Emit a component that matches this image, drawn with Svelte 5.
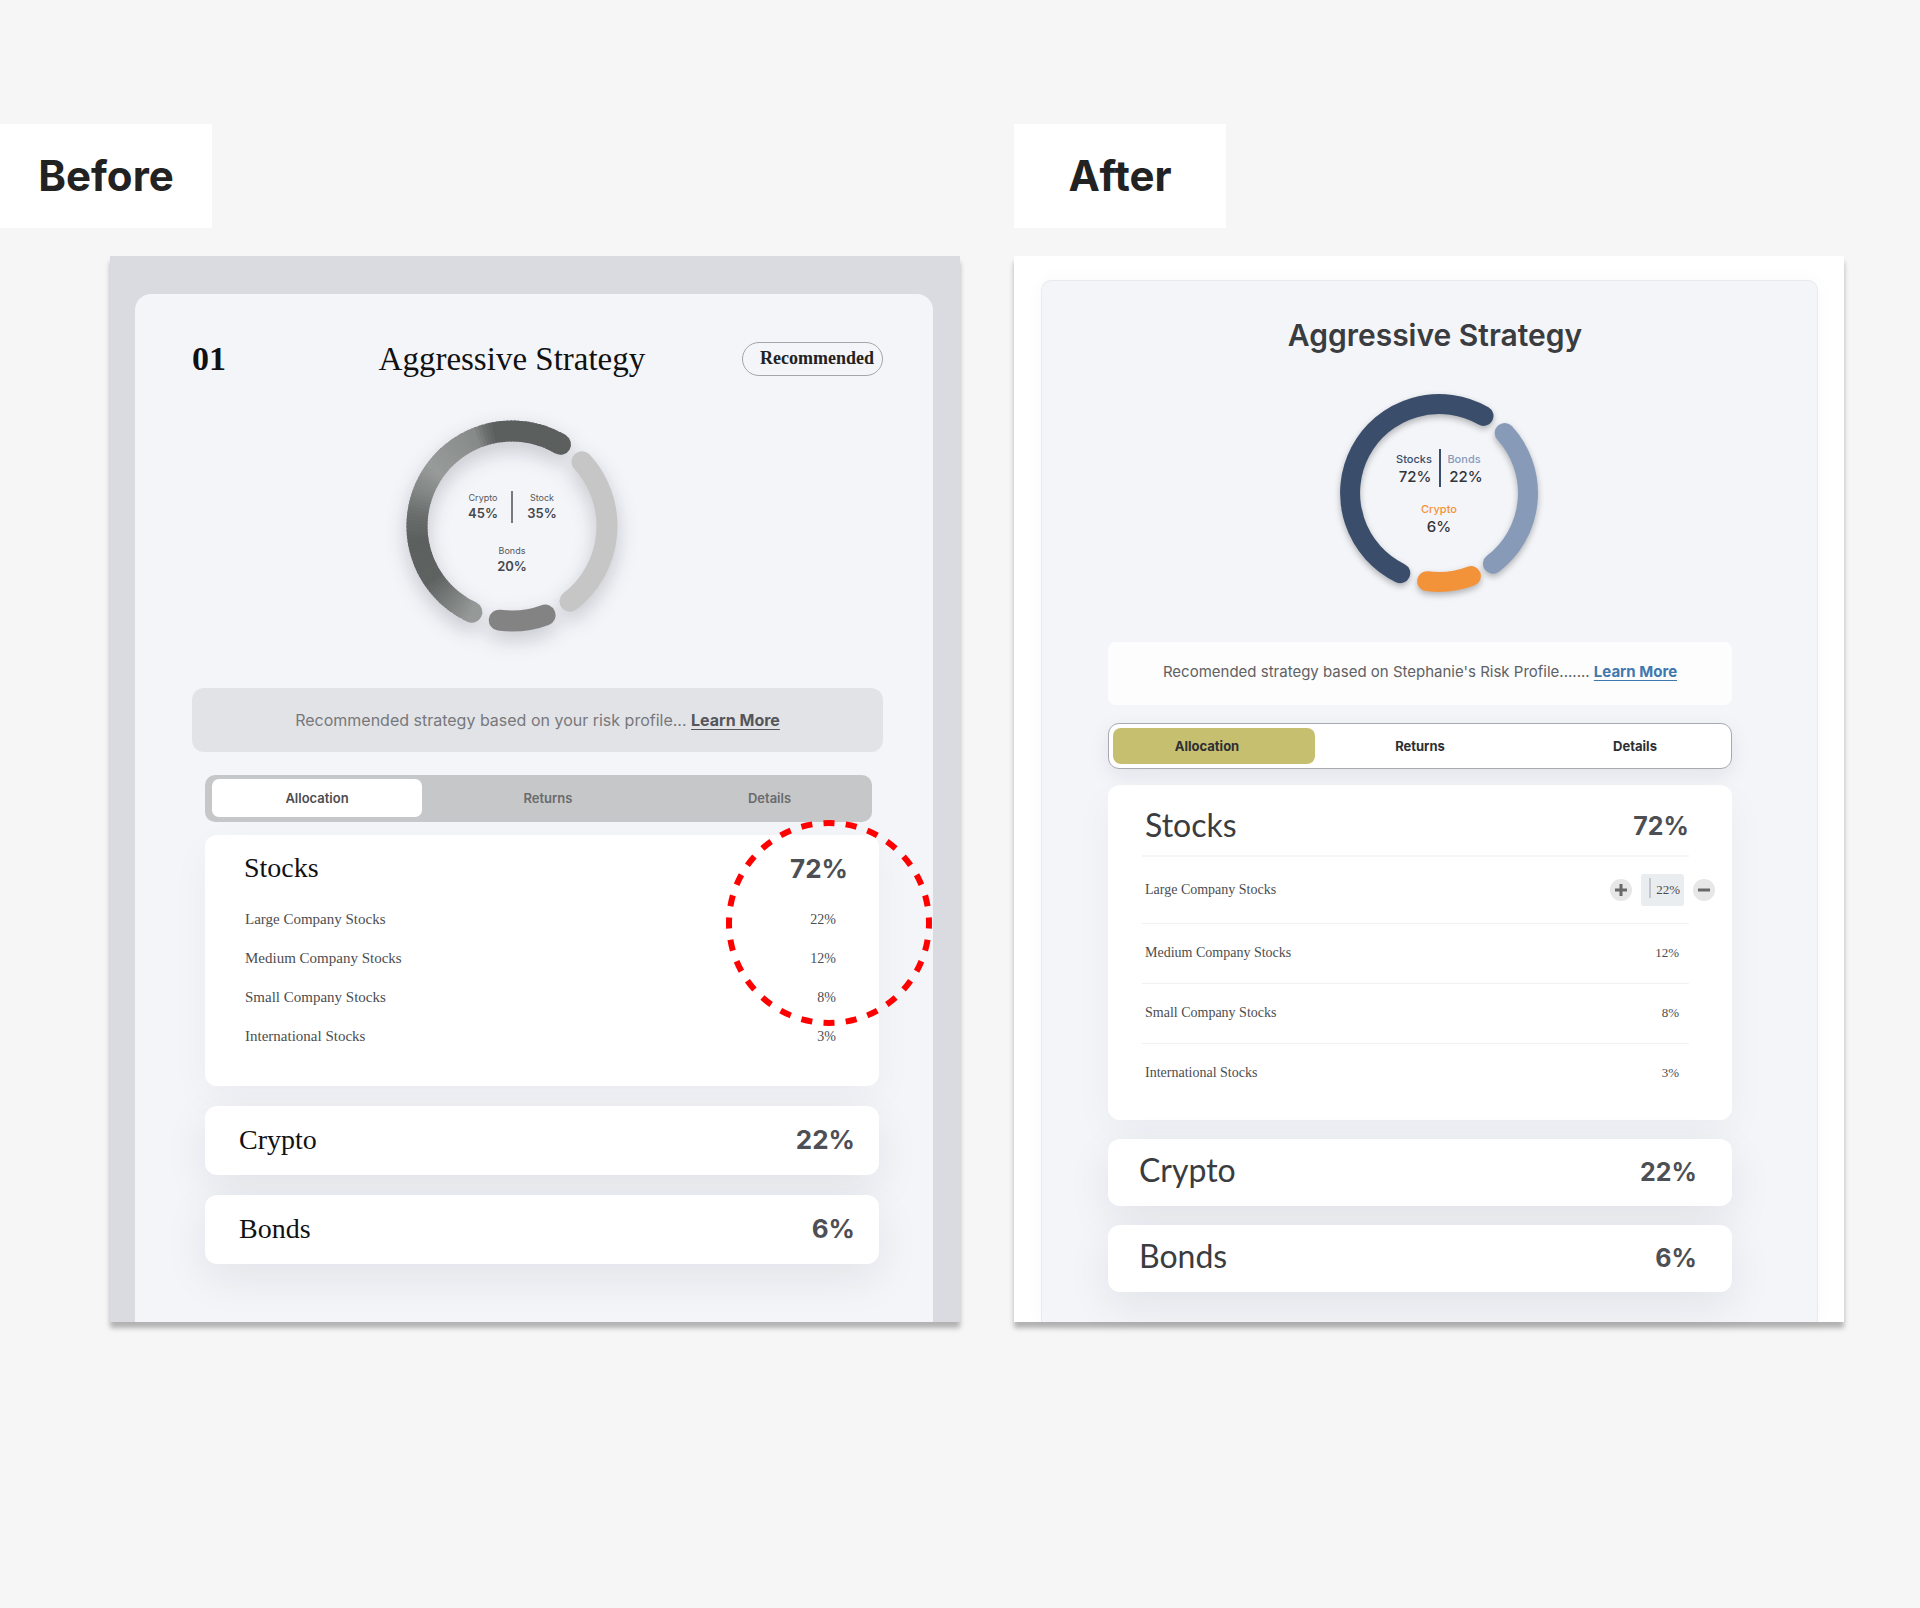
<script>
  const tabs = ['Allocation', 'Returns', 'Details'];
  let beforeTab = $state('Allocation');
  let afterTab = $state('Allocation');

  const names = ['Large Company Stocks', 'Medium Company Stocks', 'Small Company Stocks', 'International Stocks'];
  const shares = [22, 12, 8, 3];
  let large = $state(22);

  // Point on a ring centred at 120,120; degrees run clockwise from the top.
  function point(r, deg) {
    const a = (deg * Math.PI) / 180;
    return `${(120 + r * Math.sin(a)).toFixed(2)} ${(120 - r * Math.cos(a)).toFixed(2)}`;
  }

  function arc(r, from, to) {
    return `M${point(r, from)}A${r} ${r} 0 ${to - from > 180 ? 1 : 0} 1 ${point(r, to)}`;
  }

  const metalStops = [
    [205, 151], [220, 124], [236, 96], [262, 94], [277, 108], [292, 134],
    [306, 153], [325, 144], [338, 136], [344, 110], [350, 93], [391, 93]
  ];

  function metal(deg) {
    let i = 1;
    while (i < metalStops.length - 1 && metalStops[i][0] < deg) i++;
    const [d0, v0] = metalStops[i - 1];
    const [d1, v1] = metalStops[i];
    const v = Math.round(v0 + ((v1 - v0) * (deg - d0)) / (d1 - d0));
    return `rgb(${v - 2} ${v + 2} ${v + 1})`;
  }

  const slices = Array.from({ length: 93 }, (_, i) => 205 + i * 2);
</script>

{#snippet tabBar(current, pick)}
  <div class="tabs" role="tablist">
    {#each tabs as tab}
      <button type="button" role="tab" aria-selected={tab === current} class:active={tab === current} onclick={() => pick(tab)}>{tab}</button>
    {/each}
  </div>
{/snippet}

{#snippet summary(name, value)}
  <section class="box summary">
    <h3>{name}</h3>
    <strong>{value}</strong>
  </section>
{/snippet}

<main>
  <section class="side before">
    <h1>Before</h1>
    <div class="panel">
      <article class="card">
        <header>
          <span class="number">01</span>
          <h2>Aggressive Strategy</h2>
          <span class="badge">Recommended</span>
        </header>
        <div class="chart">
          <svg width="240" height="240" viewBox="0 0 240 240" role="img" aria-label="Crypto 45%, Stock 35%, Bonds 20%">
            <g class="ring soft">
              <path d={arc(95, 47.4, 142.4)} stroke="#c6c6c6" />
              <path d={arc(95, 159.6, 187.7)} stroke="#838383" />
              <path d={arc(95, 205, 206)} stroke={metal(205)} />
              <path d={arc(95, 389, 390.7)} stroke={metal(391)} />
              {#each slices as deg}
                <path class="slice" d={arc(95, deg, Math.min(deg + 3, 391))} stroke={metal(deg + 1)} />
              {/each}
            </g>
            <path d="M120 85v32" stroke="#77797c" stroke-width="2" />
            <g class="tiny">
              <text x="91" y="95">Crypto</text>
              <text x="150" y="95">Stock</text>
              <text x="120" y="148">Bonds</text>
            </g>
            <g class="small">
              <text x="91" y="112">45%</text>
              <text x="150" y="112">35%</text>
              <text x="120" y="165">20%</text>
            </g>
          </svg>
        </div>
        <p class="note">Recommended strategy based on your risk profile... <a href="#learn">Learn More</a></p>
        {@render tabBar(beforeTab, (t) => (beforeTab = t))}
        <section class="box detail">
          <div class="head"><h3>Stocks</h3><strong>72%</strong></div>
          <table>
            <tbody>
              {#each names as name, i}
                <tr><th scope="row">{name}</th><td>{shares[i]}%</td></tr>
              {/each}
            </tbody>
          </table>
          <svg class="callout" width="206" height="206" viewBox="0 0 206 206" aria-hidden="true">
            <circle cx="103" cy="103" r="100" pathLength="280" transform="rotate(-90 103 103)" />
          </svg>
        </section>
        {@render summary('Crypto', '22%')}
        {@render summary('Bonds', '6%')}
      </article>
    </div>
  </section>

  <section class="side after">
    <h1>After</h1>
    <div class="panel">
      <article class="card">
        <header><h2>Aggressive Strategy</h2></header>
        <div class="chart">
          <svg width="240" height="240" viewBox="0 0 240 240" role="img" aria-label="Stocks 72%, Bonds 22%, Crypto 6%">
            <g class="ring crisp">
              <path d={arc(89, 205.8, 390)} stroke="#3a4d6a" />
              <path d={arc(89, 47.6, 142.7)} stroke="#879bb9" />
              <path d={arc(89, 158.9, 187.7)} stroke="#f2933a" />
            </g>
            <path d="M121 76v38" stroke="#3a4d6a" stroke-width="2" />
            <g class="tiny">
              <text x="95" y="90" fill="#3a4d6a">Stocks</text>
              <text x="145" y="90" fill="#879bb9">Bonds</text>
              <text x="120" y="140" fill="#f2933a">Crypto</text>
            </g>
            <g class="small">
              <text x="96" y="109">72%</text>
              <text x="147" y="109">22%</text>
              <text x="120" y="159">6%</text>
            </g>
          </svg>
        </div>
        <p class="note">Recomended strategy based on Stephanie's Risk Profile....... <a href="#learn">Learn More</a></p>
        {@render tabBar(afterTab, (t) => (afterTab = t))}
        <section class="box detail">
          <div class="head"><h3>Stocks</h3><strong>72%</strong></div>
          <table>
            <tbody>
              {#each names as name, i}
                <tr>
                  <th scope="row">{name}</th>
                  <td>
                    {#if i === 0}
                      <div class="stepper">
                        <button type="button" aria-label="Increase" onclick={() => large++}>
                          <svg width="12" height="12" viewBox="0 0 12 12"><path d="M0 6h12M6 0v12" /></svg>
                        </button>
                        <label>
                          <span class="caret"></span>
                          <input aria-label={name} value={`${large}%`} />
                        </label>
                        <button type="button" aria-label="Decrease" onclick={() => large--}>
                          <svg width="12" height="12" viewBox="0 0 12 12"><path d="M0 6h12" /></svg>
                        </button>
                      </div>
                    {:else}
                      {shares[i]}%
                    {/if}
                  </td>
                </tr>
              {/each}
            </tbody>
          </table>
        </section>
        {@render summary('Crypto', '22%')}
        {@render summary('Bonds', '6%')}
      </article>
    </div>
  </section>
</main>

<style>
  :global(body) {
    background: #f6f6f6;
  }
  main {
    box-sizing: border-box;
    min-height: 100vh;
    display: grid;
    grid-template-columns: 960fr 830fr;
    align-items: start;
    gap: 54px;
    padding: 124px 76px 124px 0;
    font-family: Inter, 'Liberation Sans', sans-serif;
    color: #3a3c40;
  }
  h1, h2, h3, p {
    margin: 0;
  }
  h1 {
    width: 212px;
    margin-bottom: 28px;
    background: #fff;
    color: #222;
    font-size: 42px;
    font-weight: 700;
    line-height: 104px;
    text-align: center;
  }
  .panel {
    box-shadow: 0 6px 5px rgb(0 0 0 / 28%);
  }
  .before .panel {
    margin-left: 110px;
    padding: 38px 27px 0 25px;
    background: #dadbe0;
  }
  .after .panel {
    padding: 24px 26px 0 27px;
    background: #fff;
  }
  .card {
    background: #f4f5f9;
  }
  .before .card {
    padding: 48px 50px 58px 57px;
    border-radius: 16px 16px 0 0;
  }
  .after .card {
    padding: 34px 85px 30px 66px;
    border: 1px solid #e9eaed;
    border-bottom: 0;
    border-radius: 10px 10px 0 0;
    box-shadow: 0 0 20px rgb(0 0 0 / 3%);
  }

  .before header {
    display: grid;
    grid-template-columns: 27% 1fr auto;
    align-items: center;
    height: 34px;
    line-height: 34px;
    font-family: 'Liberation Serif', serif;
    color: #111;
  }
  .number {
    font-size: 34px;
    font-weight: 700;
  }
  .before h2 {
    font-size: 33px;
    font-weight: 400;
    white-space: nowrap;
  }
  .badge {
    padding: 0 8px 2px 17px;
    border: 1px solid #a5a6a6;
    border-radius: 17px;
    font-size: 18px;
    font-weight: 700;
    line-height: 30px;
    color: #222;
  }
  .after header {
    padding-left: 30px;
    text-align: center;
  }
  .after h2 {
    font-size: 30px;
    font-weight: 600;
    line-height: 40px;
  }

  .chart {
    display: flex;
    justify-content: center;
  }
  .before .chart {
    padding: 30px 52px 42px 0;
  }
  .after .chart {
    padding: 18px 0 29px 38px;
  }
  .chart svg {
    overflow: visible;
  }
  .ring path {
    fill: none;
    stroke-width: 20px;
    stroke-linecap: round;
  }
  .before .ring path {
    stroke-width: 21px;
  }
  .ring .slice {
    stroke-linecap: butt;
  }
  .soft {
    filter: drop-shadow(0 8px 10px rgb(30 30 50 / 22%));
  }
  .crisp {
    filter: drop-shadow(0 3px 3px rgb(0 0 0 / 28%));
  }
  .chart text {
    text-anchor: middle;
  }
  .before .tiny {
    font-size: 9px;
    fill: #55575a;
  }
  .before .small {
    font-size: 13px;
    font-weight: 600;
    fill: #46484c;
  }
  .after .tiny {
    font-size: 11px;
    font-weight: 500;
  }
  .after .small {
    font-size: 15px;
    font-weight: 500;
    fill: #333438;
  }

  .note {
    text-align: center;
    color: #77787b;
  }
  .before .note {
    margin-bottom: 23px;
    border-radius: 12px;
    background: #e2e3e7;
    font-size: 16px;
    line-height: 64px;
  }
  .after .note {
    margin-bottom: 18px;
    border-radius: 8px;
    background: #fdfdfd;
    font-size: 15px;
    line-height: 60px;
    padding-bottom: 3px;
    color: #606164;
  }
  .note a {
    font-weight: 700;
    color: #55565a;
    text-underline-offset: 3px;
  }
  .after .note a {
    color: #3f78ae;
  }

  .tabs {
    display: grid;
  }
  .tabs button {
    padding: 0;
    border: 0;
    background: none;
    font: inherit;
    font-size: 13px;
    font-weight: 600;
  }
  .before .tabs {
    grid-template-columns: 210fr 252fr 191fr;
    margin: 0 11px 13px 13px;
    padding: 4px 7px 5px;
    border-radius: 10px;
    background: #c6c7c9;
  }
  .before .tabs button {
    border-radius: 7px;
    line-height: 38px;
    color: #6a6b6c;
  }
  .before .tabs .active {
    background: #fff;
    color: #4c4d50;
  }
  .after .tabs {
    grid-template-columns: 202fr 210fr 202fr;
    margin-bottom: 16px;
    padding: 4px;
    border: 1px solid #a9a9b3;
    border-radius: 11px;
    background: #fff;
    box-shadow: 0 6px 20px rgb(20 20 50 / 8%);
  }
  .after .tabs button {
    border-radius: 8px;
    font-weight: 700;
    line-height: 36px;
    color: #2e2f32;
  }
  .after .tabs button:first-child {
    padding-right: 14px;
  }
  .after .tabs button:last-child {
    padding-left: 18px;
  }
  .after .tabs .active {
    background: #c6bf70;
  }

  .box {
    position: relative;
    border-radius: 12px;
    background: #fff;
    box-shadow: 0 14px 44px rgb(20 20 40 / 8%);
  }
  .before .box {
    margin: 0 4px 20px 13px;
  }
  .after .box {
    margin-bottom: 19px;
  }
  .card .box:last-child {
    margin-bottom: 0;
  }
  .head, .summary {
    display: flex;
    align-items: center;
    justify-content: space-between;
  }
  .box strong {
    font-weight: 700;
    color: #4d4f54;
  }
  .before strong {
    font-size: 26px;
  }
  .after strong {
    font-size: 25px;
  }
  .before h3 {
    font-family: 'Liberation Serif', serif;
    font-size: 28px;
    font-weight: 400;
    color: #111;
  }
  .after h3 {
    padding-bottom: 4px;
    font-family: Lato, sans-serif;
    font-size: 32px;
    font-weight: 400;
  }
  .before .detail {
    padding: 3px 0 30px;
    box-shadow: 0 14px 40px rgb(20 20 40 / 4%);
  }
  .before .head {
    height: 60px;
    padding: 0 31px 2px 39px;
  }
  .before .summary {
    height: 67px;
    padding: 0 24px 2px 34px;
  }
  .after .detail {
    padding: 0 43px 17px 34px;
    box-shadow: 0 14px 40px rgb(20 20 40 / 4%);
  }
  .after .head {
    height: 58px;
    padding: 12px 0 0 3px;
    border-bottom: 2px solid #f6f6f7;
  }
  .after .summary {
    height: 65px;
    padding: 0 35px 2px 31px;
  }

  table {
    width: 100%;
    border-collapse: collapse;
    font-family: 'Liberation Serif', serif;
    color: #4c4d50;
  }
  th, td {
    padding: 0;
    font-weight: 400;
    text-align: left;
  }
  td {
    text-align: right;
  }
  .before tr {
    height: 39px;
    font-size: 15px;
  }
  .before th {
    padding-left: 40px;
  }
  .before td {
    padding-right: 43px;
    font-size: 14px;
  }
  .after tr {
    height: 60px;
    font-size: 14px;
  }
  .after tr:first-child {
    height: 66px;
  }
  .after tr + tr {
    border-top: 1px solid #f1f1f2;
  }
  .after th {
    padding-left: 3px;
  }
  .after td {
    padding-right: 10px;
    font-size: 13px;
  }

  .callout {
    position: absolute;
    top: -15px;
    right: -53px;
    pointer-events: none;
  }
  .callout circle {
    fill: none;
    stroke: #f00;
    stroke-width: 6px;
    stroke-dasharray: 5 5;
    stroke-dashoffset: 2.5;
  }

  .stepper {
    display: flex;
    align-items: center;
    justify-content: flex-end;
    gap: 9px;
    margin-right: -36px;
  }
  .stepper button {
    display: grid;
    place-items: center;
    width: 22px;
    height: 22px;
    padding: 0;
    border: 0;
    border-radius: 50%;
    background: #e7e7e7;
  }
  .stepper path {
    fill: none;
    stroke: #68696a;
    stroke-width: 3px;
  }
  .stepper label {
    box-sizing: border-box;
    display: flex;
    align-items: center;
    width: 43px;
    height: 32px;
    padding: 0 4px 0 8px;
    border-radius: 3px;
    background: #e9edf0;
  }
  .caret {
    flex: none;
    width: 2px;
    height: 20px;
    margin-bottom: 3px;
    background: #c3c6ca;
  }
  .stepper input {
    flex: 1;
    min-width: 0;
    padding: 0;
    border: 0;
    outline: 0;
    background: none;
    font: inherit;
    color: inherit;
    text-align: right;
  }
</style>
